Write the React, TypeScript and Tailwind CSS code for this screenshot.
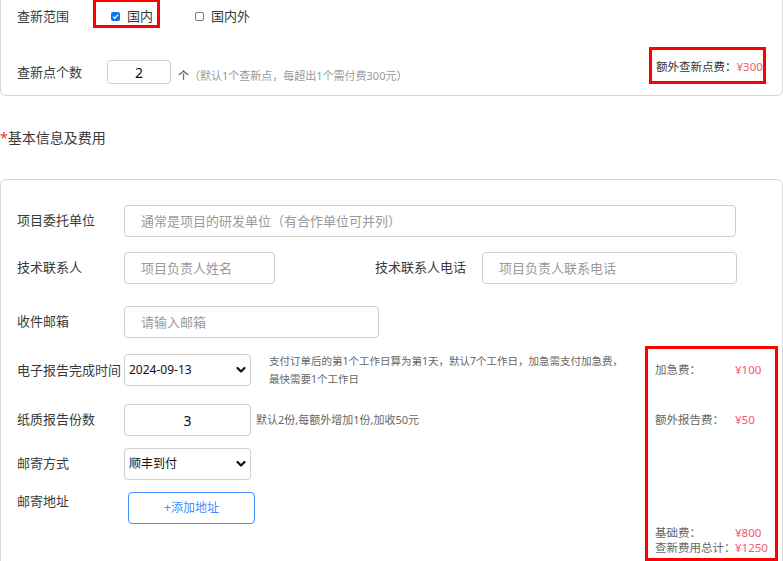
import React from 'react';

const font = "font-['Noto_Sans','Noto_Sans_CJK_SC',sans-serif]";

function Chevron() {
  return (
    <svg className="absolute right-[5px] top-1/2 -translate-y-1/2 w-[10px] h-[7px] pointer-events-none" viewBox="0 0 10 7">
      <polyline points="1.5,1.5 5,5 8.5,1.5" fill="none" stroke="#111" strokeWidth="2.2" strokeLinecap="round" strokeLinejoin="round" />
    </svg>
  );
}

function Select({ value }: { value: string }) {
  return (
    <div className="relative w-[127px] h-[32px]">
      <select
        defaultValue={value}
        className="appearance-none w-full h-full border border-[#cfcfcf] rounded-[4px] bg-white pl-[4px] text-[12px] text-[#111] outline-none"
      >
        <option>{value}</option>
      </select>
      <Chevron />
    </div>
  );
}

function Box({ checked }: { checked?: boolean }) {
  if (checked) {
    return (
      <span className="w-[9px] h-[9px] rounded-[2px] bg-[#0b75f0] flex items-center justify-center">
        <svg viewBox="0 0 10 10" className="w-[7px] h-[7px]">
          <polyline points="1.5,5.2 4,7.6 8.6,2.4" fill="none" stroke="#fff" strokeWidth="1.8" />
        </svg>
      </span>
    );
  }
  return <span className="block w-[9px] h-[9px] rounded-[2px] border border-[#777] bg-white" />;
}

const inputCls =
  'h-[32px] border border-[#d0d0d0] rounded-[4px] px-[16px] text-[13px] text-[#333] placeholder:text-[#9a9a9a] outline-none bg-white';

export default function App() {
  return (
    <div className={`relative w-[783px] h-[561px] overflow-hidden bg-white text-[#3a3a3a] ${font}`}>
      {/* 查新 card */}
      <div className="-mt-[10px] border border-[#d8d8d8] rounded-[6px] pl-[16px] pt-[15px] pb-[11px]">
        <div className="flex items-center h-[20px] text-[13px] leading-[20px]">
          <span className="w-[94px]">查新范围</span>
          <Box checked />
          <span className="ml-[7px]">国内</span>
          <span className="ml-[42px] flex"><Box /></span>
          <span className="ml-[7px]">国内外</span>
        </div>
        <div className="flex items-start h-[24px] mt-[34px]">
          <span className="w-[90px] text-[13px] leading-[24px]">查新点个数</span>
          <input
            defaultValue="2"
            className="w-[64px] h-[24px] border border-[#d0d0d0] rounded-[4px] text-center text-[14px] text-[#111] outline-none"
          />
          <span className="self-end ml-[7px] text-[11px] leading-[16px] whitespace-nowrap">
            <span className="text-[#3b3160]">个</span>
            <span className="text-[#999]">（默认1个查新点，每超出1个需付费300元）</span>
          </span>
          <span className="ml-auto w-[126px] -mt-[1px] text-[11.5px] leading-[16px] whitespace-nowrap">
            <span className="text-[#333]">额外查新点费：</span>
            <span className="text-[#f5576c]">¥300</span>
          </span>
        </div>
      </div>

      <div className="mt-[32px] text-[14px] leading-[20px]">
        <span className="text-[#e33]">*</span>基本信息及费用
      </div>

      {/* 基本信息 card */}
      <div className="mt-[31px] border border-[#d8d8d8] rounded-[6px] pl-[16px] pr-[3px] pt-[25px] h-[420px]">
        <div className="flex items-center text-[13px]">
          <span className="w-[107px]">项目委托单位</span>
          <input className={`${inputCls} w-[612px]`} placeholder="通常是项目的研发单位（有合作单位可并列）" />
        </div>
        <div className="flex items-center text-[13px] mt-[15px]">
          <span className="w-[107px]">技术联系人</span>
          <input className={`${inputCls} w-[151px]`} placeholder="项目负责人姓名" />
          <span className="w-[107px] ml-[100px]">技术联系人电话</span>
          <input className={`${inputCls} w-[255px]`} placeholder="项目负责人联系电话" />
        </div>
        <div className="flex items-center text-[13px] mt-[22px]">
          <span className="w-[107px]">收件邮箱</span>
          <input className={`${inputCls} w-[255px]`} placeholder="请输入邮箱" />
        </div>

        <div className="flex justify-between mt-[8px]">
          <div className="pt-[8px] text-[13px]">
            <div className="flex items-start h-[32px]">
              <span className="w-[107px] leading-[32px]">电子报告完成时间</span>
              <Select value="2024-09-13" />
              <span className="ml-[18px] -mt-[2px] text-[10.5px] leading-[18px] text-[#666] whitespace-nowrap">
                支付订单后的第1个工作日算为第1天，默认7个工作日，加急需支付加急费，
                <br />
                最快需要1个工作日
              </span>
            </div>
            <div className="flex items-center h-[32px] mt-[18px]">
              <span className="w-[107px]">纸质报告份数</span>
              <input defaultValue="3" className="w-[127px] h-[32px] border border-[#d0d0d0] rounded-[4px] text-center text-[14px] text-[#111] outline-none" />
              <span className="ml-[5px] text-[11px] text-[#666] whitespace-nowrap">默认2份,每额外增加1份,加收50元</span>
            </div>
            <div className="flex items-center h-[32px] mt-[12px]">
              <span className="w-[107px]">邮寄方式</span>
              <Select value="顺丰到付" />
            </div>
            <div className="flex items-start mt-[12px]">
              <span className="w-[111px] leading-[20px] -mt-[1px]">邮寄地址</span>
              <button className="w-[127px] h-[32px] border border-[#3f8cff] rounded-[4px] text-[12px] text-[#3f8cff] bg-white">
                +添加地址
              </button>
            </div>
          </div>

          <div className="w-[130px] h-[215px] pl-[6px] flex flex-col text-[11.5px] text-[#666]">
            <div className="grid grid-cols-[80px_auto] h-[32px] leading-[32px] mt-[8px]">
              <span>加急费：</span>
              <span className="text-[#f5576c]">¥100</span>
            </div>
            <div className="grid grid-cols-[80px_auto] h-[32px] leading-[32px] mt-[18px]">
              <span>额外报告费：</span>
              <span className="text-[#f5576c]">¥50</span>
            </div>
            <div className="mt-auto pb-[6px] leading-[15px]">
              <div className="grid grid-cols-[80px_auto]">
                <span>基础费：</span>
                <span className="text-[#f5576c]">¥800</span>
              </div>
              <div className="grid grid-cols-[80px_auto] whitespace-nowrap">
                <span>查新费用总计：</span>
                <span className="text-[#f5576c]">¥1250</span>
              </div>
            </div>
          </div>
        </div>
      </div>

      {/* annotation boxes */}
      <div className="absolute left-[93px] top-[-1px] w-[67px] h-[29px] border-[3px] border-[#ff0000]" />
      <div className="absolute left-[649px] top-[47px] w-[117px] h-[37px] border-[3px] border-[#ff0000]" />
      <div className="absolute left-[645px] top-[346px] w-[133px] h-[215px] border-[3px] border-[#ff0000]" />
    </div>
  );
}
